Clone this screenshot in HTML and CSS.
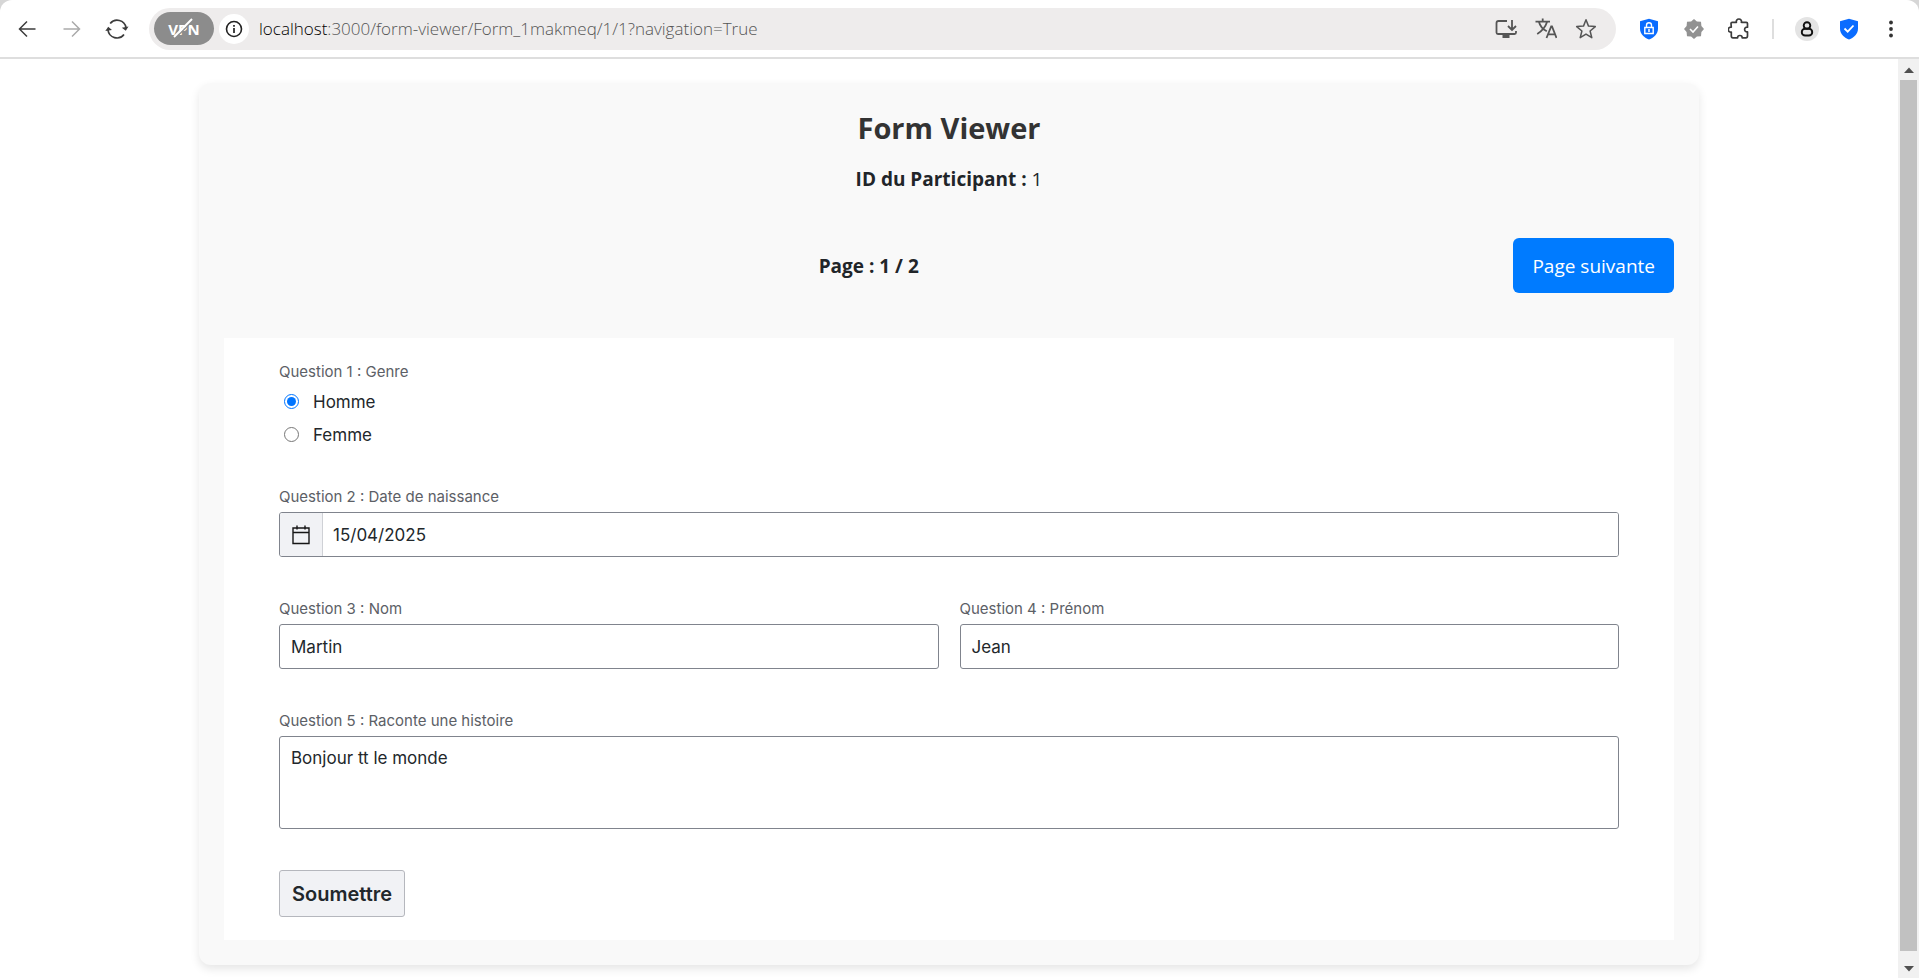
FILE: index.html
```html
<!DOCTYPE html>
<html lang="fr">
<head>
<meta charset="utf-8">
<title>Form Viewer</title>
<link rel="stylesheet" href="styles.css">
</head>
<body>
<header class="toolbar">
  <nav class="nav-buttons" aria-label="Navigation">
    <button class="icon-btn" type="button" aria-label="Retour"><svg width="20" height="20" viewBox="0 0 20 20"><path d="M18.500 10H2.500M10 2.500L2.500 10l7.500 7.500" fill="none" stroke="#3c3c3c" stroke-width="1.500"/></svg></button>
    <button class="icon-btn" type="button" aria-label="Avancer"><svg width="20" height="20" viewBox="0 0 20 20"><path d="M1.500 10h16M10 2.500l7.500 7.500-7.500 7.500" fill="none" stroke="#aaa" stroke-width="1.500"/></svg></button>
    <button class="icon-btn" type="button" aria-label="Actualiser"><svg width="24" height="22" viewBox="0 0 24 22"><path d="M5.200 5.500A9 9 0 0 1 21 9.500M3 12a9 9 0 0 0 16 4.500" fill="none" stroke="#3c3c3c" stroke-width="1.700"/><path d="M23.500 8.500l-2.700 4.200-4-3zM.3 13l2.900-4.200 3.800 3.200z" fill="#3c3c3c"/></svg></button>
  </nav>
  <div class="address">
    <button class="vpn" type="button">VPN<svg class="vpn-slash" width="22" height="22" viewBox="0 0 22 22"><path d="M3.500 21L21.500 3" stroke="#8c8c8c" stroke-width="1.500"/><path d="M2 20L20 2" stroke="#fff" stroke-width="2"/></svg></button>
    <button class="site-info" type="button" aria-label="Informations"><svg width="18" height="18" viewBox="0 0 18 18"><circle cx="9" cy="9" r="7.500" fill="none" stroke="#222" stroke-width="1.600"/><path d="M9 8v5M9 5v1.700" stroke="#222" stroke-width="1.700"/></svg></button>
    <div class="url"><span class="url-host">localhost</span>:3000/form-viewer/Form_1makmeq/1/1?navigation=True</div>
    <div class="address-actions">
      <button class="icon-btn" type="button" aria-label="Installer"><svg width="22" height="20" viewBox="0 0 22 20"><path d="M12 2H3.500Q1.500 2 1.500 4v9.500q0 1.500 1.500 1.500h16.500q1.500 0 1.500-1.500V12M17 1v9M13 7l4 4 4-4" fill="none" stroke="#555" stroke-width="1.800"/><path d="M7.500 15h7v4h-7z" fill="#555"/></svg></button>
      <button class="icon-btn" type="button" aria-label="Traduire"><svg width="22" height="21" viewBox="0 0 22 21"><path d="M.5 3.700h14.500M7.700.5v3M4 4c1 4 4 7.300 7.800 9.300M12 4c-1.500 5-5 9-9.800 12M11.500 20L16.200 8.500h.8L21.500 20M13 16.300h7" fill="none" stroke="#555" stroke-width="1.800"/></svg></button>
      <button class="icon-btn" type="button" aria-label="Favori"><svg width="22" height="22" viewBox="0 0 22 22"><path d="M11 1.800l2.500 6.300 6.800.5-5.200 4.400 1.700 6.700-5.800-3.600-5.800 3.600 1.700-6.700-5.200-4.400 6.800-.5z" fill="none" stroke="#555" stroke-width="1.500" stroke-linejoin="round"/></svg></button>
    </div>
  </div>
  <div class="extensions">
    <button class="icon-btn" type="button" aria-label="Protection"><svg width="20" height="22" viewBox="0 0 20 22"><path d="M10 .8l9 2.400v7.300c0 5.200-3.800 9-9 11-5.200-2-9-5.800-9-11V3.200z" fill="#0a6cff"/><path d="M7.500 10V7.300a2.500 2.500 0 0 1 5 0V10M5.800 9.500h8.400v6H5.800z" fill="none" stroke="#fff" stroke-width="1.400"/><path d="M10 11v3" stroke="#fff" stroke-width="1.500"/></svg></button>
    <button class="icon-btn" type="button" aria-label="Vérification"><svg width="20" height="20" viewBox="0 0 20 20"><path d="M10 0l2.900 2.600L17 2.700l.4 4.200L20 10l-2.600 3.100-.4 4.200-4.100.1L10 20l-2.900-2.600-4.100-.1-.4-4.200L0 10l2.600-3.100L3 2.700l4.100-.1z" fill="#929292"/><path d="M6 10l3 3 5-5.500" fill="none" stroke="#fff" stroke-width="1.600"/></svg></button>
    <button class="icon-btn" type="button" aria-label="Extensions"><svg width="22" height="22" viewBox="0 0 22 22"><path d="M3 5.500Q3 4.300 4.200 4.300H8.400a2.600 2.600 0 1 1 5 0h4.800q1.300 0 1.300 1.300v3.600a2.400 2.400 0 1 0 0 4.700v4.200q0 1.700-1.700 1.700h-3.600a2.300 2.300 0 1 0-4.600 0H5q-1.700 0-1.700-1.700v-4a2.500 2.500 0 1 1 0-4.900z" fill="none" stroke="#3c3c3c" stroke-width="1.700" stroke-linejoin="round"/></svg></button>
    <span class="divider"></span>
    <div class="account">
      <button class="icon-btn profile" type="button" aria-label="Profil"><svg width="14" height="16" viewBox="0 0 14 16"><circle cx="7" cy="4.500" r="3.300" fill="none" stroke="#111" stroke-width="1.900"/><rect x="1.800" y="7.800" width="10.400" height="6.700" rx="3.300" fill="none" stroke="#111" stroke-width="1.900"/></svg></button>
      <button class="icon-btn" type="button" aria-label="Sécurité"><svg width="20" height="22" viewBox="0 0 20 22"><path d="M10 .8l9 2.400v7.300c0 5.200-3.800 9-9 11-5.200-2-9-5.800-9-11V3.200z" fill="#0a6cff"/><path d="M5.500 10.500l3.200 3.200 5.800-6.200" fill="none" stroke="#fff" stroke-width="1.800"/></svg></button>
      <button class="icon-btn" type="button" aria-label="Menu"><svg width="6" height="18" viewBox="0 0 6 18"><circle cx="3" cy="2.500" r="1.900" fill="#333"/><circle cx="3" cy="9" r="1.900" fill="#333"/><circle cx="3" cy="15.500" r="1.900" fill="#333"/></svg></button>
    </div>
  </div>
</header>
<div class="viewport">
  <main class="page">
    <section class="card">
      <h1 class="title">Form Viewer</h1>
      <p class="participant"><strong>ID du Participant :</strong> 1</p>
      <div class="pager">
        <strong class="page-info">Page : 1 / 2</strong>
        <button class="next" type="button">Page suivante</button>
      </div>
      <form class="form">
        <fieldset class="choices">
          <legend class="label">Question 1 : Genre</legend>
          <label class="choice"><input class="radio" type="radio" name="genre" checked>Homme</label>
          <label class="choice"><input class="radio" type="radio" name="genre">Femme</label>
        </fieldset>
        <div class="field">
          <label class="label" for="naissance">Question 2 : Date de naissance</label>
          <div class="date-box">
            <span class="date-icon"><svg width="20" height="20" viewBox="0 0 20 20"><path d="M2 3h16v15.500H2zM2 7.500h16M6 .5v4M14 .5v4" fill="none" stroke="#161616" stroke-width="1.400"/></svg></span>
            <input class="date-input" id="naissance" type="text" value="15/04/2025">
          </div>
        </div>
        <div class="row">
          <div class="field">
            <label class="label" for="nom">Question 3 : Nom</label>
            <input class="input" id="nom" type="text" value="Martin">
          </div>
          <div class="field">
            <label class="label" for="prenom">Question 4 : Prénom</label>
            <input class="input" id="prenom" type="text" value="Jean">
          </div>
        </div>
        <div class="field">
          <label class="label" for="histoire">Question 5 : Raconte une histoire</label>
          <textarea class="input textarea" id="histoire" rows="3">Bonjour tt le monde</textarea>
        </div>
        <button class="submit" type="button">Soumettre</button>
      </form>
    </section>
  </main>
  <div class="scrollbar" aria-hidden="true">
    <svg class="arrow" width="10" height="6" viewBox="0 0 10 6"><path d="M0 6l5-5.500L10 6z" fill="#505050"/></svg>
    <div class="thumb"></div>
    <svg class="arrow" width="10" height="6" viewBox="0 0 10 6"><path d="M0 0l5 5.500L10 0z" fill="#505050"/></svg>
  </div>
</div>
</body>
</html>
```
FILE: styles.css
```css
* {
  box-sizing: border-box;
}

body {
  margin: 0;
  height: 100vh;
  display: flex;
  flex-direction: column;
  overflow: hidden;
  background: #d6d6d6;
  color: #212529;
  font-family: "Open Sans", "Noto Sans", sans-serif;
  font-size: 19px;
}

button {
  font-family: inherit;
}

svg {
  display: block;
  flex: none;
}

/* Browser toolbar */
.toolbar {
  display: flex;
  align-items: center;
  flex: none;
  height: 59px;
  padding: 0 16px 0 15px;
  background: #fff;
  border-bottom: 2px solid #dedede;
  border-radius: 12px 12px 0 0;
}

.icon-btn {
  display: flex;
  align-items: center;
  justify-content: center;
  width: 24px;
  height: 24px;
  padding: 0;
  border: 0;
  background: none;
}

.nav-buttons {
  display: flex;
  gap: 21px;
}

.address {
  display: flex;
  align-items: center;
  flex: 1;
  height: 42px;
  margin-left: 20px;
  padding: 0 18px 0 5px;
  background: #eeecec;
  border-radius: 21px;
}

.vpn {
  position: relative;
  width: 60px;
  height: 33px;
  padding: 0;
  border: 0;
  border-radius: 17px;
  background: #8c8c8c;
  color: #fff;
  font-size: 15px;
  font-weight: 700;
}

.vpn-slash {
  position: absolute;
  left: 18px;
  top: 5px;
}

.site-info {
  display: flex;
  align-items: center;
  justify-content: center;
  width: 30px;
  height: 30px;
  margin-left: 5px;
  padding: 0;
  border: 0;
  border-radius: 50%;
  background: #fff;
}

.url {
  flex: 1;
  margin-left: 10px;
  color: #555;
  font-size: 17px;
  font-weight: 300;
  white-space: nowrap;
}

.url-host {
  color: #000;
}

.address-actions {
  display: flex;
  gap: 16px;
}

.extensions {
  display: flex;
  align-items: center;
  gap: 21px;
  margin-left: 21px;
}

.account {
  display: flex;
  gap: 18px;
}

.divider {
  width: 2px;
  height: 20px;
  background: #dedede;
}

.profile {
  border-radius: 50%;
  background: #e4e4e4;
}

/* Page area */
.viewport {
  display: flex;
  flex: 1;
  min-height: 0;
}

.page {
  flex: 1;
  padding: 24px 20px;
  background: #fff;
  overflow: hidden;
}

.card {
  max-width: 1500px;
  margin: 0 auto;
  padding: 25px;
  background: #f9f9f9;
  border-radius: 12px;
  box-shadow: 0 4px 10px rgba(0, 0, 0, 0.1);
}

.title {
  margin: 0;
  color: #333;
  font-size: 29px;
  line-height: 40px;
  text-align: center;
}

.participant {
  margin: 16px 0 0;
  line-height: 30px;
  text-align: center;
}

.pager {
  display: flex;
  align-items: center;
  margin: 44px 0 45px;
}

.page-info {
  flex: 1;
  text-align: center;
}

.next {
  height: 55px;
  padding: 0 19px;
  border: 0;
  border-radius: 6px;
  background: #007bff;
  color: #fff;
  font-size: 19px;
}

/* Form */
.form {
  padding: 23px 55px;
  background: #fff;
  color: #22272b;
  font-family: Inter, "Noto Sans", sans-serif;
  font-size: 17px;
}

.choices {
  margin: 0 0 35px;
  padding: 0;
  border: 0;
}

.label {
  display: block;
  margin-bottom: 5px;
  padding: 0;
  color: #5c6066;
  font-size: 15px;
  line-height: 21px;
}

.choice {
  display: flex;
  align-items: center;
  gap: 14px;
  height: 33px;
  padding-left: 5px;
}

.choices .label {
  margin-bottom: 3px;
}

.radio {
  width: 15px;
  height: 15px;
  margin: 0;
  accent-color: #0075ff;
}

.field {
  flex: 1;
  margin-bottom: 41px;
}

.row {
  display: flex;
  gap: 21px;
}

.input,
.date-box {
  display: block;
  width: 100%;
  height: 45px;
  border: 1px solid #80848d;
  border-radius: 3px;
  background: #fff;
}

.input {
  padding: 0 11px;
  color: inherit;
  font: inherit;
}

.date-box {
  display: flex;
  overflow: hidden;
}

.date-icon {
  display: flex;
  align-items: center;
  justify-content: center;
  width: 43px;
  background: #f1f2f5;
  border-right: 1px solid #cfd1d6;
}

.date-input {
  flex: 1;
  padding: 0 10px;
  border: 0;
  color: inherit;
  font: inherit;
}

.textarea {
  height: 93px;
  padding-top: 8px;
  line-height: 26px;
  resize: none;
}

.submit {
  display: block;
  height: 47px;
  padding: 0 12px;
  border: 1px solid #b5b7bd;
  border-radius: 3px;
  background: #f1f2f5;
  color: #22272b;
  font-size: 20px;
  font-weight: 600;
}

/* Scrollbar */
.scrollbar {
  display: flex;
  flex-direction: column;
  align-items: center;
  gap: 7px;
  width: 21px;
  padding: 8px 0 6px;
  background: #f1f1f1;
}

.thumb {
  flex: 1;
  width: 17px;
  margin-bottom: 8px;
  background: #c1c1c1;
}
```
